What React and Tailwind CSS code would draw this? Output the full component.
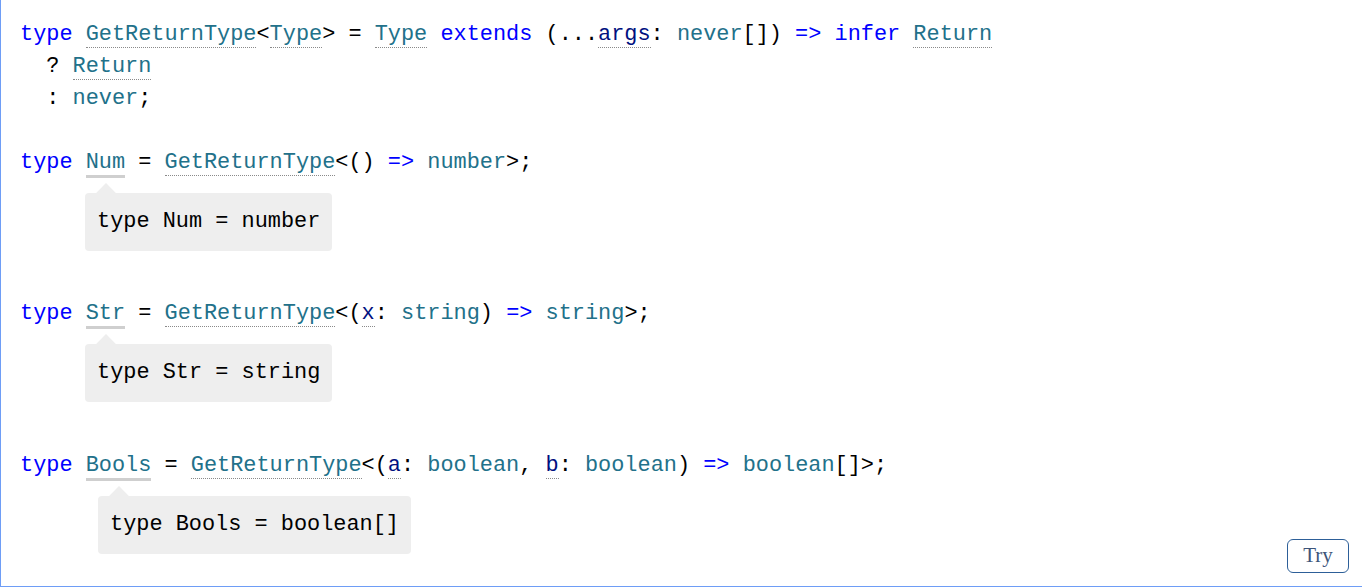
import React from 'react';

const KW = 'text-[#0000ff]';
const TY = 'text-[#22718a]';
const PM = 'text-[#001080]';

function Ref({ className, children }) {
  return <span className={`${className} border-b border-dotted border-[#8a8a8a]`}>{children}</span>;
}

function Hover({ children }) {
  return <span className={`${TY} border-b-[3px] border-[#cfcfcf]`}>{children}</span>;
}

function Popup({ indent, last, children }) {
  return (
    <div className={`mt-[14px] flex ${last ? 'mb-[48px]' : 'mb-[47px]'} ${indent}`}>
      <div className="relative h-[58px] rounded-[4px] bg-[#eeeeee] px-3 py-[13px] text-black">
        <div className="absolute -top-[7px] left-[14px] h-[14px] w-[14px] rotate-45 bg-[#eeeeee]" />
        <span className="relative">{children}</span>
      </div>
    </div>
  );
}

export default function App() {
  return (
    <div className="relative h-[587px] w-full border-b border-l border-[#6e9df6] bg-white">
      <pre
        className="pl-[19px] pt-[19px] text-[21.9px] leading-[32px] text-black"
        style={{ fontFamily: '"Liberation Mono", "DejaVu Sans Mono", monospace' }}
      >
        <div>
          <span className={KW}>type</span> <Ref className={TY}>GetReturnType</Ref>&lt;<Ref className={TY}>Type</Ref>&gt; = <Ref className={TY}>Type</Ref> <span className={KW}>extends</span> (...<Ref className={PM}>args</Ref>: <span className={TY}>never</span>[]) <span className={KW}>=&gt;</span> <span className={KW}>infer</span> <Ref className={TY}>Return</Ref>
        </div>
        <div>
          {'  '}? <Ref className={TY}>Return</Ref>
        </div>
        <div>
          {'  '}: <span className={TY}>never</span>;
        </div>
        <div>{' '}</div>
        <div>
          <span className={KW}>type</span> <Hover>Num</Hover> = <Ref className={TY}>GetReturnType</Ref>&lt;() <span className={KW}>=&gt;</span> <span className={TY}>number</span>&gt;;
        </div>
        <Popup indent="pl-[65px]">type Num = number</Popup>
        <div>
          <span className={KW}>type</span> <Hover>Str</Hover> = <Ref className={TY}>GetReturnType</Ref>&lt;(<Ref className={PM}>x</Ref>: <span className={TY}>string</span>) <span className={KW}>=&gt;</span> <span className={TY}>string</span>&gt;;
        </div>
        <Popup indent="pl-[65px]" last>type Str = string</Popup>
        <div>
          <span className={KW}>type</span> <Hover>Bools</Hover> = <Ref className={TY}>GetReturnType</Ref>&lt;(<Ref className={PM}>a</Ref>: <span className={TY}>boolean</span>, <Ref className={PM}>b</Ref>: <span className={TY}>boolean</span>) <span className={KW}>=&gt;</span> <span className={TY}>boolean</span>[]&gt;;
        </div>
        <Popup indent="pl-[78px]">type Bools = boolean[]</Popup>
      </pre>
      <button
        className="absolute bottom-[13px] right-[13px] h-[34px] w-[62px] rounded-[6px] border border-[#2d5f98] bg-white text-[21px] text-[#3d5479]"
        style={{ fontFamily: '"Liberation Serif", serif' }}
      >
        Try
      </button>
    </div>
  );
}
